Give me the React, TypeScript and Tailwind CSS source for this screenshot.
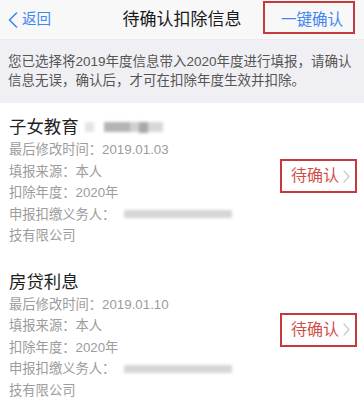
import React from "react"

const font = "font-['Liberation_Sans','Noto_Sans_CJK_SC',sans-serif]"

interface Deduction {
  title: string
  modified: string
  source: string
  year: string
  blurTitle: boolean
  shift: string
}

const items: Deduction[] = [
  { title: "子女教育", modified: "2019.01.03", source: "本人", year: "2020年", blurTitle: true, shift: "mb-[9px]" },
  { title: "房贷利息", modified: "2019.01.10", source: "本人", year: "2020年", blurTitle: false, shift: "mb-[11px]" },
]

function Chevron({ className }: { className?: string }) {
  return (
    <svg width="7" height="13" viewBox="0 0 7 13" fill="none" className={className}>
      <polyline points="1,1 6,6.5 1,12" stroke="currentColor" strokeWidth="1.2" strokeLinecap="round" strokeLinejoin="round" />
    </svg>
  )
}

function DeductionCard({ item }: { item: Deduction }) {
  return (
    <div className="flex items-center bg-white pl-[9px] pr-[7px] pt-3 pb-[11px]">
      <div className="flex-1">
        {/* 标题 */}
        <div className="flex items-center h-[24px]">
          <span className="text-[17.4px] leading-[24px] text-[#1e1e1e]">{item.title}</span>
          {item.blurTitle && (
            <div className="flex items-center ml-[6px] blur-[1.5px]">
              <div className="w-[9px] h-[10px] bg-[#e4e4e4]" />
              <div className="w-[26px] h-[10px] ml-[10px] bg-[#b4b4b4]" />
              <div className="w-[9px] h-[10px] bg-[#d0d0d0]" />
              <div className="w-[9px] h-[11px] bg-[#a8a8a8]" />
              <div className="w-[15px] h-[10px] bg-[#d8d8d8]" />
            </div>
          )}
        </div>

        {/* 明细 */}
        <div className="text-[13.3px] leading-[21.5px] text-[#9c9c9c]">
          <div>最后修改时间：{item.modified}</div>
          <div>填报来源：本人</div>
          <div>扣除年度：{item.year}</div>
          <div className="flex items-center">
            <span>申报扣缴义务人：</span>
            <div className="ml-[9px] w-[108px] h-[8px] bg-[#d6d6d6] blur-[1.5px]" />
          </div>
          <div>技有限公司</div>
        </div>
      </div>

      {/* 待确认 */}
      <div className={`flex items-center w-[77px] h-[34px] border-2 border-[#c63a3c] pl-[9px] ${item.shift}`}>
        <span className="text-[16px] leading-none text-[#cf5048]">待确认</span>
        <Chevron className="ml-[4px] text-[#c9c9cc]" />
      </div>
    </div>
  )
}

export default function App() {
  return (
    <div className={`w-[364px] h-[410px] overflow-hidden bg-white ${font}`}>
      {/* 导航栏 */}
      <div className="grid grid-cols-[1fr_auto_1fr] items-start h-[40px] bg-[#f8f8f8] border-b border-[#ececec]">
        <div className="flex items-center h-[40px] pl-[8px] text-[#3f86ee]">
          <svg width="10" height="16" viewBox="0 0 10 16" fill="none">
            <polyline points="8.5,1 1.5,8 8.5,15" stroke="currentColor" strokeWidth="1.6" strokeLinecap="round" strokeLinejoin="round" />
          </svg>
          <span className="ml-[4px] text-[14.5px]">返回</span>
        </div>
        <div className="h-[40px] flex items-center text-[17px] text-[#1a1a1a]">待确认扣除信息</div>
        <div className="flex justify-end pr-[9px]">
          <div className="mt-[1px] w-[92px] h-[33px] border-2 border-[#c63a3c] flex items-center justify-center pt-[4px] pl-[6px] text-[15.5px] text-[#3f86ee]">
            一键确认
          </div>
        </div>
      </div>

      {/* 提示 */}
      <div className="bg-[#f0f0f4] px-[8px] pt-[12px] pb-[13px] text-[13.5px] leading-[19px] text-[#555555]">
        您已选择将2019年度信息带入2020年度进行填报，请确认
        <br />
        信息无误，确认后，才可在扣除年度生效并扣除。
      </div>

      {items.map((item) => (
        <DeductionCard key={item.title} item={item} />
      ))}
    </div>
  )
}
